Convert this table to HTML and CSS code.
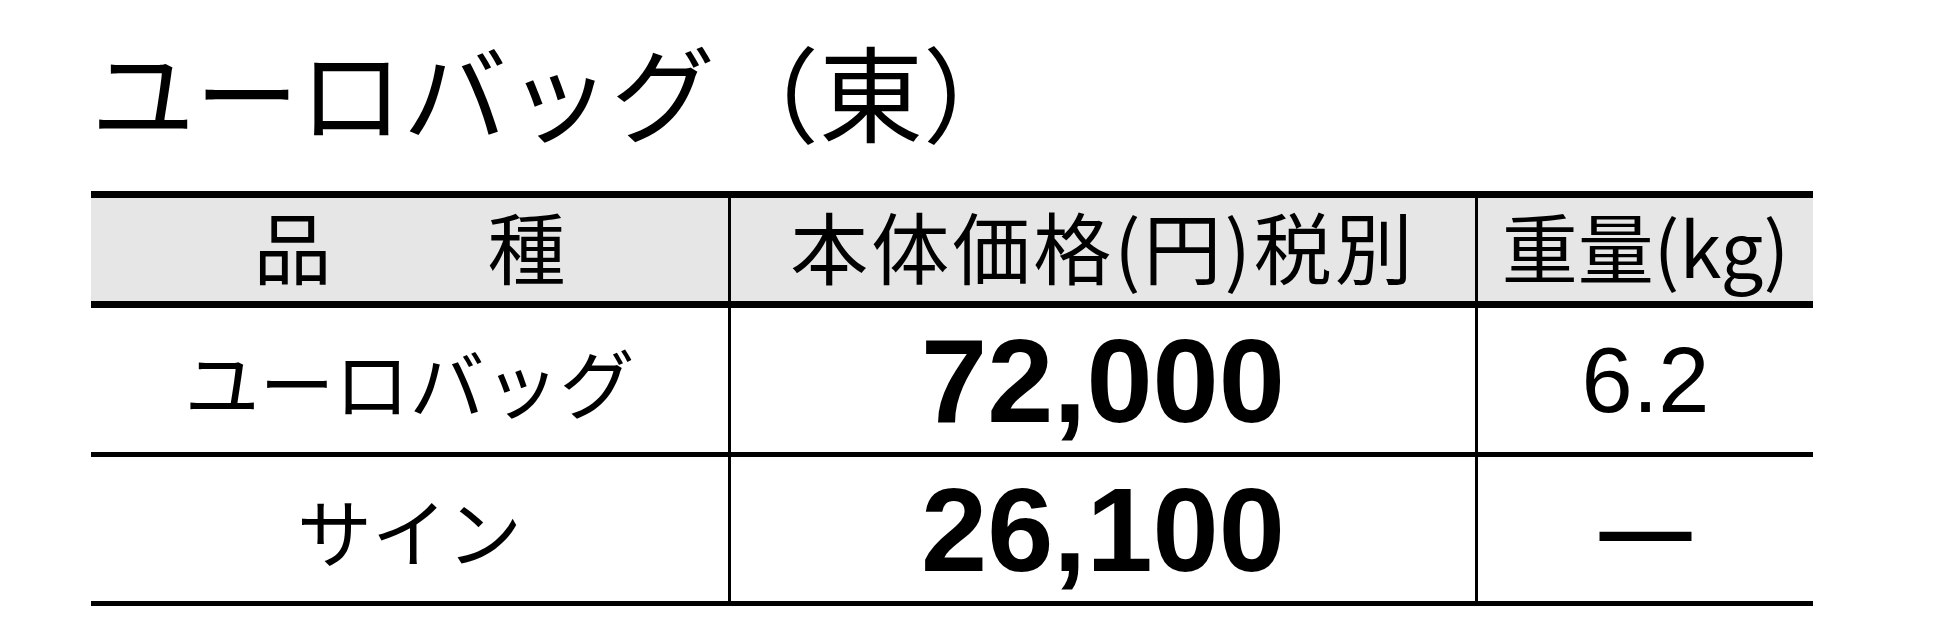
FILE: index.html
```html
<!DOCTYPE html>
<html lang="ja">
<head>
<meta charset="utf-8">
<title>ユーロバッグ（東）</title>
<link rel="stylesheet" href="styles.css">
</head>
<body>
<div class="page">
  <h1 class="title">ユーロバッグ（東）</h1>
  <div class="table">
    <div class="row head">
      <div class="cell">品　　種</div>
      <div class="cell spaced">本体価格(円)税別</div>
      <div class="cell small">重量(kg)</div>
    </div>
    <div class="row body sep">
      <div class="cell name">ユーロバッグ</div>
      <div class="cell price">72,000</div>
      <div class="cell weight">6.2</div>
    </div>
    <div class="row body">
      <div class="cell name">サイン</div>
      <div class="cell price">26,100</div>
      <div class="cell weight dash">—</div>
    </div>
  </div>
</div>
</body>
</html>
```

FILE: styles.css
```css
html, body {
  margin: 0;
  padding: 0;
  background: #ffffff;
}

.page {
  padding: 38px 0 0 91px;
  color: #000;
  font-family: "Noto Sans CJK JP", "Noto Sans", sans-serif;
}

.title {
  margin: 0;
  font-size: 104px;
  font-weight: 400;
  line-height: 104px;
  height: 104px;
  white-space: nowrap;
}

.table {
  margin-top: 49px;
  width: 1722px;
  border-top: 7px solid #000;
  border-bottom: 5px solid #000;
}

.row {
  display: grid;
  grid-template-columns: 637px 747px 338px;
}

.cell {
  display: flex;
  align-items: center;
  justify-content: center;
  white-space: nowrap;
}

.cell + .cell {
  border-left: 3px solid #000;
}

.head {
  height: 103px;
  background: #e6e6e6;
  border-bottom: 7px solid #000;
  font-size: 78px;
  line-height: 1;
}

.head .cell {
  padding-bottom: 10px;
  box-sizing: border-box;
}

.head .spaced {
  letter-spacing: 3px;
}

.head .small {
  font-size: 76px;
}

.body {
  height: 144px;
}

.sep {
  border-bottom: 5px solid #000;
}

.name {
  font-size: 75px;
  line-height: 1;
}

.price {
  font-family: "Liberation Sans", Arial, sans-serif;
  font-weight: 700;
  font-size: 119px;
}

.weight {
  font-family: "Liberation Sans", Arial, sans-serif;
  font-size: 92px;
}

.dash {
  font-weight: 700;
}
```
